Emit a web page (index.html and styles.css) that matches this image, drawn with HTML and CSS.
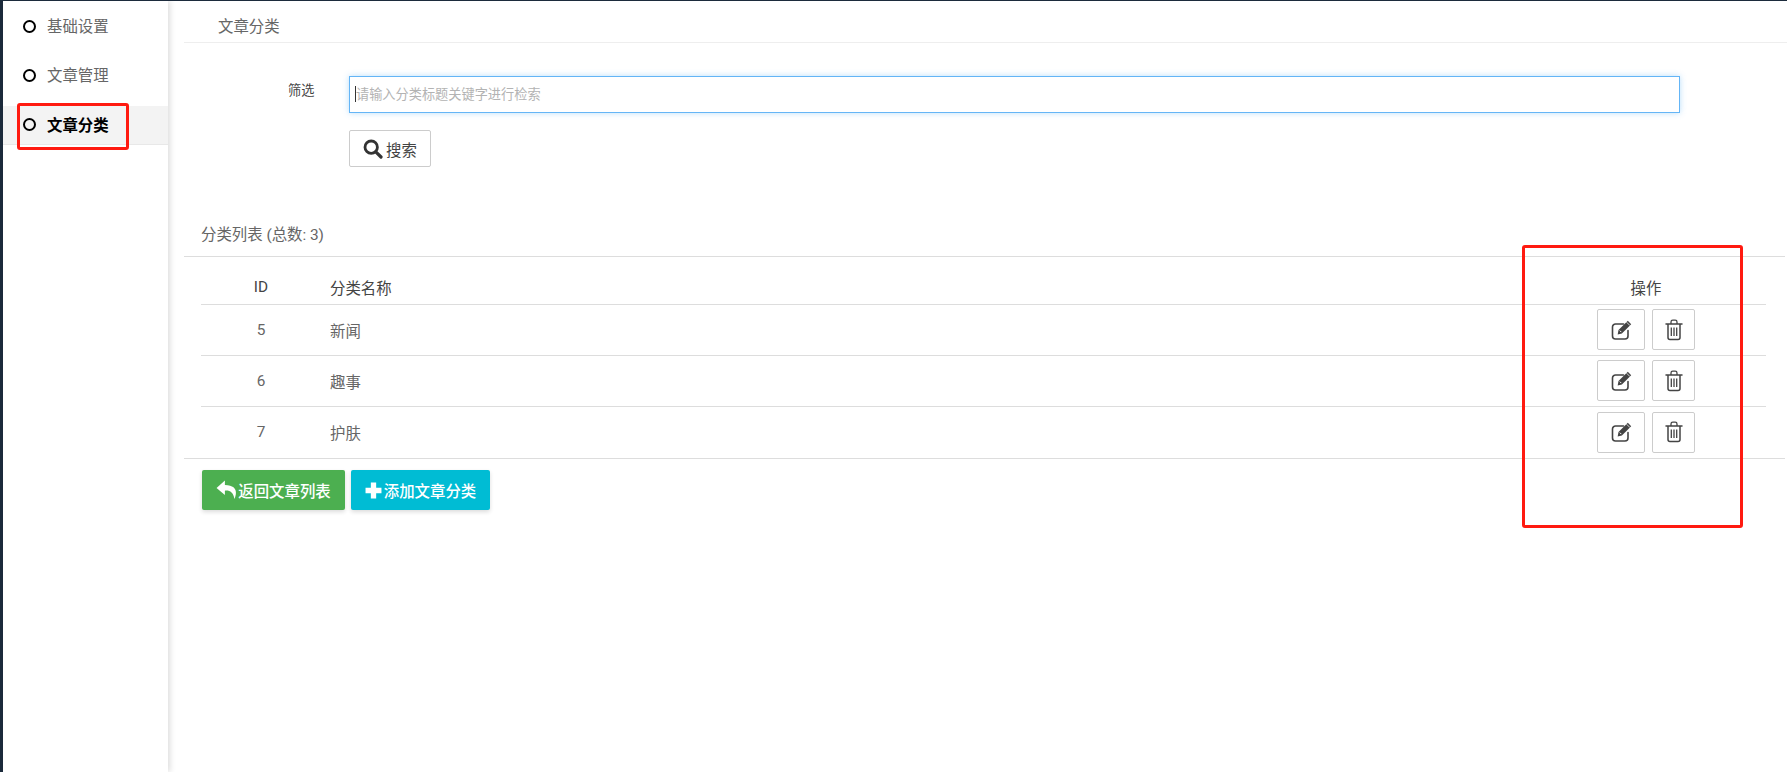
FILE: index.html
```html
<!DOCTYPE html>
<html lang="zh">
<head>
<meta charset="utf-8">
<title>文章分类</title>
<link rel="stylesheet" href="styles.css">
</head>
<body>
<div class="app">
  <aside class="sidebar">
    <a class="nav-item"><i class="dot"></i><span>基础设置</span></a>
    <a class="nav-item"><i class="dot"></i><span>文章管理</span></a>
    <a class="nav-item active"><i class="dot"></i><span>文章分类</span></a>
  </aside>
  <main class="main">
    <div class="crumb"><span>文章分类</span></div>
    <form class="filter">
      <label class="filter-label">筛选</label>
      <div class="filter-body">
        <div class="fake-input"><i class="caret"></i><span>请输入分类标题关键字进行检索</span></div>
        <button type="button" class="btn-search">
          <svg class="ico-search" viewBox="0 0 20 20"><circle cx="8.2" cy="8.2" r="6.2" fill="none" stroke="#333" stroke-width="2.8"/><path d="M12.8 12.8 18 18" stroke="#333" stroke-width="3.2" stroke-linecap="round"/></svg>
          <span>搜索</span>
        </button>
      </div>
    </form>
    <div class="list-title">分类列表 (总数: 3)</div>
    <div class="table-wrap">
      <table class="table">
        <thead>
          <tr><th class="c-id">ID</th><th class="c-name">分类名称</th><th class="c-op">操作</th></tr>
        </thead>
        <tbody>
          <tr>
            <td class="c-id">5</td><td class="c-name">新闻</td>
            <td class="c-op"><div class="ops">
              <button type="button" class="btn-op edit"><svg viewBox="0 0 22 22"><use href="#i-edit"/></svg></button>
              <button type="button" class="btn-op del"><svg viewBox="0 0 18 22"><use href="#i-trash"/></svg></button>
            </div></td>
          </tr>
          <tr>
            <td class="c-id">6</td><td class="c-name">趣事</td>
            <td class="c-op"><div class="ops">
              <button type="button" class="btn-op edit"><svg viewBox="0 0 22 22"><use href="#i-edit"/></svg></button>
              <button type="button" class="btn-op del"><svg viewBox="0 0 18 22"><use href="#i-trash"/></svg></button>
            </div></td>
          </tr>
          <tr>
            <td class="c-id">7</td><td class="c-name">护肤</td>
            <td class="c-op"><div class="ops">
              <button type="button" class="btn-op edit"><svg viewBox="0 0 22 22"><use href="#i-edit"/></svg></button>
              <button type="button" class="btn-op del"><svg viewBox="0 0 18 22"><use href="#i-trash"/></svg></button>
            </div></td>
          </tr>
        </tbody>
      </table>
    </div>
    <div class="actions">
      <button type="button" class="btn green">
        <svg class="ico-back" viewBox="0 0 18 18"><path d="M8 0.5 0.5 7.200 8 13.500V9.600c4.600-.4 7.500 1.400 8.600 7.600 2.600-6.500 2.200-12.200-8.600-12.600z" fill="#fff"/></svg>
        <span>返回文章列表</span>
      </button>
      <button type="button" class="btn cyan">
        <svg class="ico-plus" viewBox="0 0 16 16"><path d="M5.500 0.500h5v5h5v5h-5v5h-5v-5h-5v-5h5z" fill="#fff"/></svg>
        <span>添加文章分类</span>
      </button>
    </div>
  </main>
</div>
<div class="mark mark-nav"></div>
<div class="mark mark-ops"></div>
<svg class="defs" width="0" height="0">
  <defs>
    <g id="i-edit">
      <path d="M17 11.500V17a3 3 0 0 1-3 3H4.500a3 3 0 0 1-3-3V8a3 3 0 0 1 3-3h8" fill="none" stroke="#444" stroke-width="1.600" stroke-linecap="round"/>
      <path d="M7.500 11 16.800 1.800l3.400 3.400-9.300 9.300-4.200.9z" fill="#444"/>
      <path d="M8.800 11.600 10.300 13.100" stroke="#fff" stroke-width="1"/>
      <path d="M15.600 3.200 18.900 6.500" stroke="#fff" stroke-width=".8"/>
    </g>
    <g id="i-trash">
      <path d="M1 5h16" stroke="#444" stroke-width="1.500" stroke-linecap="round"/>
      <path d="M6 5V3a1.800 1.800 0 0 1 1.800-1.800h2.400A1.800 1.800 0 0 1 12 3v2" fill="none" stroke="#444" stroke-width="1.300"/>
      <path d="M3 5v13.500A2 2 0 0 0 5 20.500h8a2 2 0 0 0 2-2V5" fill="none" stroke="#444" stroke-width="1.500"/>
      <path d="M6.300 8.500v8.500M9 8.500v8.500M11.700 8.500v8.500" stroke="#444" stroke-width="1.300"/>
    </g>
  </defs>
</svg>
</body>
</html>
```
FILE: styles.css
```css
* { box-sizing: border-box; }
html, body { margin: 0; height: 100%; }
body {
  background: #fff;
  color: #555;
  font-family: Roboto, "Noto Sans CJK SC", "Liberation Sans", sans-serif;
  font-size: 15.4px;
  overflow: hidden;
  border-top: 1px solid #1c2b3c;
}
.app { display: flex; height: 771px; border-left: 3px solid #1c2b3c; }
.sidebar {
  width: 165px;
  flex: none;
  padding-top: 5px;
  background: #fff;
  box-shadow: 2px 0 6px rgba(0, 0, 0, .14);
}
.nav-item {
  display: flex;
  align-items: center;
  height: 38px;
  margin-bottom: 11px;
  padding-left: 20px;
  color: #666;
}
.nav-item.active {
  height: 39px;
  margin-top: 13px;
  padding-bottom: 3px;
  background: #f3f3f3;
  border-bottom: 1px solid #e8e8e8;
  color: #000;
  font-weight: 700;
}
.dot {
  width: 13px;
  height: 13px;
  margin: 2px 11px 0 0;
  border: 2px solid #000;
  border-radius: 50%;
}
.main { flex: 1; min-width: 0; padding-left: 16px; }
.crumb {
  height: 42px;
  padding: 12px 0 0 34px;
  line-height: 28px;
  color: #666;
  border-bottom: 1px solid #eee;
}
.filter { display: flex; padding-top: 33px; }
.filter-label {
  width: 165px;
  padding: 4px 0 0 104px;
  font-size: 13.2px;
  line-height: 22px;
  color: #444;
}
.filter-body { width: 1331px; }
.fake-input {
  display: flex;
  align-items: center;
  height: 37px;
  padding: 0 0 2px 5px;
  border: 1px solid #64b5f6;
  box-shadow: 0 0 6px rgba(100, 181, 246, .45);
  font-size: 13.2px;
  color: #b3b3b3;
}
.caret { width: 1px; height: 16px; background: #333; }
.btn-search {
  display: flex;
  align-items: center;
  gap: 3px;
  width: 82px;
  height: 37px;
  margin-top: 17px;
  padding: 0 0 0 13px;
  background: #fff;
  border: 1px solid #ccc;
  border-radius: 2px;
  font: inherit;
  color: #444;
}
.ico-search { width: 20px; height: 20px; }
.list-title {
  margin: 51px 2px 0 0;
  height: 39px;
  padding: 3px 0 0 17px;
  border-bottom: 1px solid #ddd;
  line-height: 28px;
  color: #666;
}
.table-wrap { padding: 9px 19px 0 17px; border-bottom: 1px solid #ddd; margin-right: 2px; }
.table { width: 100%; border-collapse: collapse; table-layout: fixed; }
.table th { height: 38px; font-weight: 400; color: #444; padding: 5px 0 0; border-bottom: 1px solid #ddd; }
.table td { height: 51px; color: #666; border-bottom: 1px solid #ddd; padding: 0; }
.table tbody tr:last-child td { border-bottom: 0; height: 52px; }
.c-id { width: 120px; text-align: center; }
.table .c-name { text-align: left; padding-left: 9px; }
.c-op { width: 240px; text-align: center; }
.ops { display: flex; justify-content: center; gap: 7px; }
.btn-op {
  display: flex;
  align-items: center;
  justify-content: center;
  height: 41px;
  padding: 0;
  background: #fff;
  border: 1px solid #ccc;
  border-radius: 2px;
}
.btn-op.edit { width: 48px; padding-left: 2px; }
.btn-op.del { width: 43px; padding-left: 1px; }
.btn-op.edit svg { width: 22px; height: 22px; }
.btn-op.del svg { width: 18px; height: 22px; }
.actions { display: flex; gap: 6px; padding: 11px 0 0 18px; }
.btn {
  display: flex;
  align-items: center;
  justify-content: center;
  gap: 2px;
  height: 40px;
  padding: 0;
  border: 0;
  border-radius: 2px;
  color: #fff;
  font: inherit;
  font-weight: 500;
  box-shadow: 0 2px 4px rgba(0, 0, 0, .14);
}
.btn.green { width: 143px; background: #4caf50; }
.btn.cyan { width: 139px; background: #00bcd4; }
.ico-back { width: 20px; height: 20px; }
.ico-plus { width: 17px; height: 17px; }
.mark {
  position: absolute;
  border: 3px solid #ff1a10;
  border-radius: 3px;
}
.mark-nav { left: 17px; top: 103px; width: 112px; height: 47px; }
.mark-ops { left: 1522px; top: 245px; width: 221px; height: 283px; }
.defs { position: absolute; }
```
